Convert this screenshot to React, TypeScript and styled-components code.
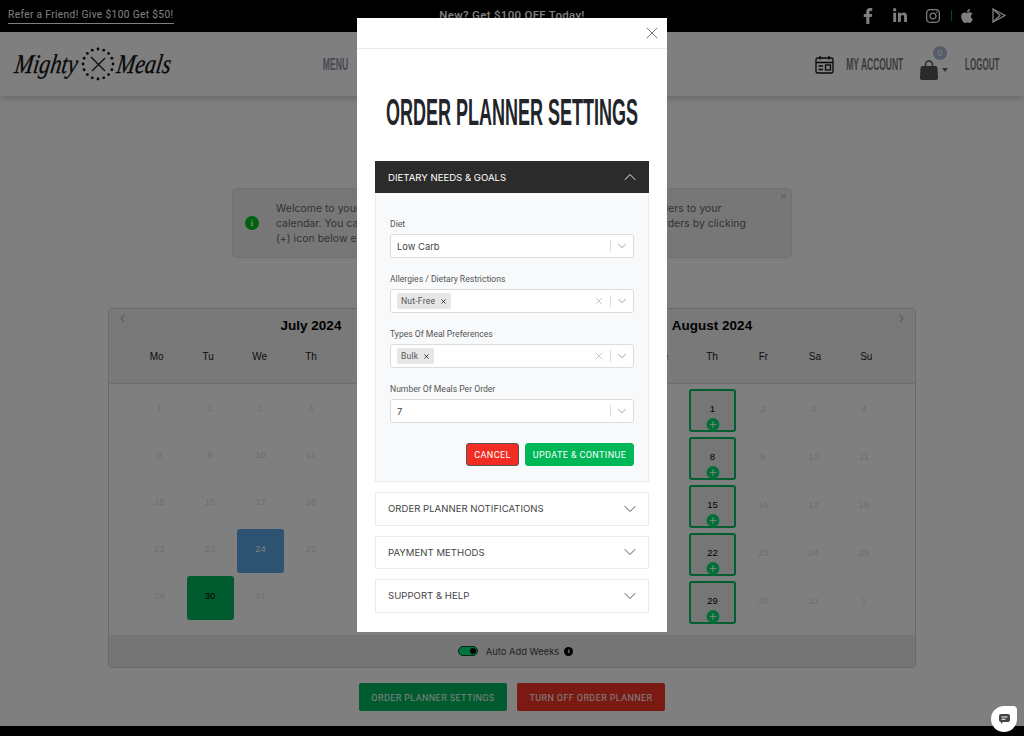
import React from "react";
import styled, { createGlobalStyle } from "styled-components";
import { ChevronDown, ChevronUp, ChevronLeft, ChevronRight, X, Plus } from "lucide-react";
import { FaFacebookF, FaLinkedinIn, FaInstagram, FaApple } from "react-icons/fa";

const Global = createGlobalStyle`
  html, body { margin: 0; padding: 0; width: 1024px; height: 736px; overflow: hidden; background: #fff; font-family: Inter, "Liberation Sans", sans-serif; }
  * { box-sizing: border-box; }
`;
const Page = styled.div`width: 1024px; height: 736px; display: flex; flex-direction: column; overflow: hidden;`;
const TopBar = styled.div`height: 32px; background: #000; display: flex; align-items: center; justify-content: space-between; padding: 0 10px 1px 8px; color: #fff;`;
const Promo = styled.a`font: 400 10.2px Roboto, sans-serif; letter-spacing: .35px; color: #fff; border-bottom: 1px solid #fff; padding-bottom: 3px; margin-top: 1px; width: 166px; white-space: nowrap;`;
const Announce = styled.div`font: 500 11.5px Roboto, sans-serif; letter-spacing: .3px; color: #fff; position: absolute; left: 0; right: 0; top: 8px; text-align: center;`;
const Socials = styled.div`display: flex; align-items: center; color: #fff;`;
const Social = styled.span<{ $w: number; $ml?: number }>`width: ${p => p.$w}px; margin-left: ${p => p.$ml ?? 0}px; display: flex; justify-content: center; font-size: 16px;`;
const Divider = styled.span`width: 1px; height: 11px; background: #0f8f42; margin: 0 8px 0 10px;`;

const Header = styled.header`height: 64px; background: #fff; box-shadow: 0 2px 8px rgba(0,0,0,.22); display: flex; align-items: center; padding: 0 25px 0 15px; position: relative;`;
const Logo = styled.div`width: 156px; display: flex; align-items: center; color: #111; flex-shrink: 0;`;
const LogoWord = styled.span<{ $w: number }>`
  display: block; width: ${p => p.$w}px; flex-shrink: 0; font: italic 400 27px "Liberation Serif", serif; white-space: nowrap;
  -webkit-text-stroke: .3px #111; transform-origin: left center; transform: scaleX(.82) skewX(-10deg);
`;
const NavSlot = styled.div<{ $w: number; $ml?: number }>`width: ${p => p.$w}px; margin-left: ${p => p.$ml ?? 0}px; padding-top: 1px; display: flex; justify-content: center; flex-shrink: 0;`;
const Squeezed = styled.span<{ $size: number; $sx: number; $color: string }>`
  display: inline-block; font: 700 ${p => p.$size}px "Liberation Sans", sans-serif; color: ${p => p.$color};
  transform: scaleX(${p => p.$sx}); white-space: nowrap;
`;
const NavRight = styled.div`margin-left: auto; display: flex; align-items: center;`;
const BagWrap = styled.div`width: 28px; height: 32px; margin-left: 16px; position: relative; display: flex; align-items: flex-end; color: #555;`;
const Badge = styled.span`position: absolute; top: -2px; left: 13px; width: 14px; height: 14px; border-radius: 50%; background: #a9bad0; color: #fff; font: 400 8px Inter, sans-serif; display: flex; align-items: center; justify-content: center;`;
const Caret = styled.span`position: absolute; left: 22px; top: 20px; border: 3.5px solid transparent; border-top: 4px solid #666; border-bottom: 0;`;

const Main = styled.main`flex: 1; display: flex; flex-direction: column; align-items: center; background: #fff; padding-top: 92px;`;
const Alert = styled.div`width: 560px; height: 70px; background: #eee; border: 1px solid #e2e2e2; border-radius: 5px; display: flex; align-items: center; padding-left: 12px; position: relative; font-size: 10.4px; letter-spacing: .06px; line-height: 15px; color: #666;`;
const AlertIcon = styled.span`width: 14px; height: 14px; border-radius: 50%; background: #00c51f; color: #fff; font: 700 9px "Liberation Serif", serif; display: flex; align-items: center; justify-content: center; margin-right: 17px; flex-shrink: 0;`;
const AlertClose = styled.span`position: absolute; top: 3px; right: 3px; color: #999; display: flex;`;

const Calendar = styled.section`width: 808px; height: 360px; margin-top: 50px; border: 1px solid #d4d4d4; border-radius: 3px; display: flex; flex-direction: column; position: relative;`;
const CalTop = styled.div`height: 75px; background: #f3f3f3; border-bottom: 1px solid #d8d8d8; display: flex; gap: 41px; padding-left: 22px;`;
const HeadMonth = styled.div`width: 360px; display: flex; flex-direction: column; align-items: center; padding-top: 8px;`;
const MonthTitle = styled.div`font: 700 13.5px "Liberation Sans", sans-serif; color: #000; height: 18px; line-height: 18px;`;
const Weekdays = styled.div`width: 100%; display: grid; grid-template-columns: repeat(7, 1fr); margin-top: 16px; font: 400 10px "Liberation Sans", sans-serif; color: #222; text-align: center;`;
const Arrow = styled.span<{ $side: string }>`position: absolute; top: 3px; ${p => p.$side}: 7px; color: #bbb; display: flex;`;
const CalBody = styled.div`flex: 1; display: flex; gap: 51.5px; padding: 4px 0 0 27px;`;
const Days = styled.div<{ $h: number; $mt: number; $gap: number }>`width: 350px; margin-top: ${p => p.$mt}px; display: grid; grid-template-columns: repeat(7, 47px); grid-auto-rows: ${p => p.$h}px; column-gap: 3.5px; row-gap: ${p => p.$gap}px; align-content: start;`;
const Day = styled.div<{ $bg?: string; $border?: boolean; $color?: string }>`
  position: relative; border-radius: 3px; text-align: center; padding-top: 14px;
  font: 400 9.5px/12px "Liberation Sans", sans-serif; color: ${p => p.$color ?? "#ddd"};
  background: ${p => p.$bg ?? "transparent"};
  border: ${p => (p.$border ? "2px solid #00c060" : "0")};
  ${p => (p.$border ? "padding-top: 12px; background: #ececec;" : "")}
`;
const AddDot = styled.span`position: absolute; left: 50%; bottom: -1px; transform: translateX(-50%); width: 13px; height: 13px; border-radius: 50%; background: #00e070; color: #fff; display: flex; align-items: center; justify-content: center;`;
const CalFoot = styled.div`height: 32px; background: #ebebeb; display: flex; align-items: center; justify-content: center; font-size: 9.4px; color: #444; padding-left: 7px;`;
const Toggle = styled.span`width: 20px; height: 10px; border-radius: 5px; background: #00e678; border: 1px solid #004d26; position: relative; margin-right: 8px; display: block;`;
const Knob = styled.span`position: absolute; right: 1px; top: 1px; width: 6px; height: 6px; border-radius: 50%; background: #000;`;
const InfoDot = styled.span`width: 9px; height: 9px; border-radius: 50%; background: #000; color: #fff; font: 700 7px "Liberation Serif", serif; display: flex; align-items: center; justify-content: center; margin-left: 5px;`;
const Actions = styled.div`display: flex; gap: 10px; margin-top: 15px;`;
const ActionBtn = styled.button<{ $bg: string }>`width: 148px; height: 28px; border: 0; border-radius: 2px; background: ${p => p.$bg}; color: #fff; font: 400 9px Roboto, sans-serif; letter-spacing: .4px; padding: 1px 0 0;`;
const Foot = styled.footer`height: 10px; background: #000;`;

const Chat = styled.div`position: fixed; z-index: 30; left: 991px; top: 706px; width: 26px; height: 26px; background: #fff; border-radius: 50% 4px 50% 50%; display: flex; align-items: center; justify-content: center;`;
const Overlay = styled.div`position: fixed; inset: 0; background: rgba(0,0,0,.5); z-index: 10;`;
const Modal = styled.div`position: fixed; z-index: 20; left: 357px; top: 18px; width: 310px; height: 614px; background: #fff; display: flex; flex-direction: column;`;
const ModalHead = styled.div`height: 31px; border-bottom: 1px solid #e9ecef; display: flex; align-items: center; justify-content: flex-end; padding-right: 5px; color: #777; flex-shrink: 0;`;
const TitleBlock = styled.div`height: 112px; padding-top: 16px; display: flex; align-items: center; justify-content: center; flex-shrink: 0;`;
const Accordion = styled.div`padding: 0 18px; display: flex; flex-direction: column;`;
const OpenHead = styled.div`height: 32px; background: #2b2b2b; color: #fff; display: flex; align-items: center; justify-content: space-between; padding: 0 9px 0 13px; font-size: 9.6px;`;
const Panel = styled.div`height: 289px; background: #f8f9fa; border: 1px solid #ececec; border-top: 0; padding: 25px 14px 0 14px; margin-bottom: 10px;`;
const Field = styled.div`margin-bottom: 15px;`;
const Label = styled.label`display: block; font: 400 8.6px/12px Roboto, sans-serif; color: #555; margin-bottom: 4px;`;
const Select = styled.div`height: 24px; background: #fff; border: 1px solid #dcdcdc; border-radius: 3px; display: flex; align-items: center; padding-left: 6px; font-size: 9.4px; color: #444;`;
const Value = styled.span`flex: 1;`;
const ChipRow = styled.span`flex: 1; display: flex;`;
const Chip = styled.span`height: 16px; background: #e6e6e6; border-radius: 2px; display: flex; align-items: center; padding: 0 4px; font: 400 8.6px Roboto, sans-serif; letter-spacing: .2px; color: #555; gap: 5px;`;
const ChipX = styled.span`display: flex; color: #222;`;
const ClearX = styled.span`color: #ccc; display: flex; margin-right: 5px;`;
const Sep = styled.span`width: 1px; height: 12px; background: #ddd;`;
const Caretbox = styled.span`width: 22px; display: flex; justify-content: center; color: #ccc;`;
const FormBtns = styled.div`display: flex; justify-content: flex-end; gap: 6px; margin-top: 20px;`;
const FormBtn = styled.button<{ $bg: string; $w: number; $bd: string }>`width: ${p => p.$w}px; height: 23px; background: ${p => p.$bg}; border: 1px solid ${p => p.$bd}; border-radius: 3px; color: #fff; font: 400 9px Roboto, sans-serif; letter-spacing: .4px; padding: 0;`;
const Item = styled.div`height: 33.5px; background: #fff; border: 1px solid #ececec; display: flex; align-items: center; justify-content: space-between; padding: 0 8px 0 12px; font-size: 9.6px; color: #444; margin-bottom: 10px;`;

const mkDays = (n: number) => Array.from({ length: n }, (_, i) => i + 1);
const stars = Array.from({ length: 16 }, (_, i) => (i / 16) * Math.PI * 2);

const LogoMark = () => (
  <svg width="34" height="34" viewBox="0 0 34 34" style={{ margin: "0 2px 0 3px", flexShrink: 0 }}>
    {stars.map((a, i) => (
      <circle key={i} cx={17 + 15 * Math.cos(a)} cy={17 + 15 * Math.sin(a)} r="1.4" fill="#111" />
    ))}
    <path d="M10 10 L24 24 M24 11 L11 24" stroke="#111" strokeWidth="1.2" fill="none" />
  </svg>
);
const CalIcon = () => (
  <svg width="19" height="19" viewBox="0 0 19 19" fill="none" stroke="#111" strokeWidth="1.3">
    <rect x="1" y="3" width="17" height="15" rx="1.5" />
    <path d="M1 7.5H18M5 1V4.5M14 1V4.5M3.5 11H8M3.5 14.5H8" />
    <rect x="10.5" y="10" width="5" height="5" />
  </svg>
);
const BagIcon = () => (
  <svg width="18" height="20" viewBox="0 0 18 20">
    <path d="M5.5 7V4.500a3.500 3.500 0 0 1 7 0V7" stroke="currentColor" strokeWidth="1.500" fill="none" />
    <path d="M2.500 6h13a2 2 0 0 1 2 2l.5 9.500a2 2 0 0 1-2 2.500H2a2 2 0 0 1-2-2.500L.5 8a2 2 0 0 1 2-2z" fill="currentColor" />
  </svg>
);
const PlayIcon = () => (
  <svg width="14" height="15" viewBox="0 0 14 15" fill="none" stroke="#fff" strokeWidth="1.3">
    <path d="M1 1L13 7.500L1 14Z" /><path d="M1 1L8 7.500L1 14" />
  </svg>
);
const ChatIcon = () => (
  <svg width="11" height="10" viewBox="0 0 11 10">
    <path d="M2 0h7a2 2 0 0 1 2 2v4a2 2 0 0 1-2 2H4L2 10V8a2 2 0 0 1-2-2V2a2 2 0 0 1 2-2z" fill="#444" />
    <path d="M2.500 3H8.500M2.500 5.300H6.500" stroke="#fff" strokeWidth="1" />
  </svg>
);

const week = ["Mo", "Tu", "We", "Th", "Fr", "Sa", "Su"];

const SelectBox = ({ children, clear }: { children: React.ReactNode; clear?: boolean }) => (
  <Select>
    {children}
    {clear && <ClearX><X size={12} /></ClearX>}
    <Sep />
    <Caretbox><ChevronDown size={14} /></Caretbox>
  </Select>
);

export default function App() {
  return (
    <>
      <Global />
      <Page>
        <TopBar>
          <Promo>Refer a Friend! Give $100 Get $50!</Promo>
          <Announce>New? Get $100 OFF Today!</Announce>
          <Socials>
            <Social $w={14}><FaFacebookF /></Social>
            <Social $w={50}><FaLinkedinIn /></Social>
            <Social $w={16}><FaInstagram /></Social>
            <Divider />
            <Social $w={14}><FaApple /></Social>
            <Social $w={30} $ml={10}><PlayIcon /></Social>
          </Socials>
        </TopBar>
        <Header>
          <Logo>
            <LogoWord $w={63}>Mighty</LogoWord>
            <LogoMark />
            <LogoWord $w={55}>Meals</LogoWord>
          </Logo>
          <NavSlot $w={26} $ml={152}><Squeezed $size={16} $sx={0.54} $color="#8a93a8">MENU</Squeezed></NavSlot>
          <NavRight>
            <CalIcon />
            <NavSlot $w={58} $ml={12}><Squeezed $size={16} $sx={0.53} $color="#777">MY ACCOUNT</Squeezed></NavSlot>
            <BagWrap><BagIcon /><Badge>0</Badge><Caret /></BagWrap>
            <NavSlot $w={34} $ml={17}><Squeezed $size={16} $sx={0.5} $color="#777">LOGOUT</Squeezed></NavSlot>
          </NavRight>
        </Header>
        <Main>
          <Alert>
            <AlertIcon>i</AlertIcon>
            <span>
              Welcome to your personalized meals planner! Here you can easily add new orders to your<br />
              calendar. You can pick your delivery dates you would like and add additional orders by clicking<br />
              (+) icon below each date.
            </span>
            <AlertClose><X size={9} /></AlertClose>
          </Alert>
          <Calendar>
            <Arrow $side="left"><ChevronLeft size={13} /></Arrow>
            <Arrow $side="right"><ChevronRight size={13} /></Arrow>
            <CalTop>
              {["July 2024", "August 2024"].map(t => (
                <HeadMonth key={t}>
                  <MonthTitle>{t}</MonthTitle>
                  <Weekdays>{week.map(w => <span key={w}>{w}</span>)}</Weekdays>
                </HeadMonth>
              ))}
            </CalTop>
            <CalBody>
              <Days $h={44} $mt={0} $gap={3}>
                {mkDays(31).map(d => (
                  <Day key={d} $bg={d === 24 ? "#5aa4e4" : d === 30 ? "#00b85c" : undefined} $color={d === 24 ? "#fff" : d === 30 ? "#000" : undefined}>{d}</Day>
                ))}
              </Days>
              <Days $h={43} $mt={1} $gap={5}>
                {[0, 0, 0].map((_, i) => <span key={i} />)}
                {[...mkDays(31), 1].map((d, i) => {
                  const thursday = i % 7 === 0;
                  return (
                    <Day key={i} $border={thursday} $color={thursday ? "#000" : undefined}>
                      {d}
                      {thursday && <AddDot><Plus size={9} strokeWidth={3} /></AddDot>}
                    </Day>
                  );
                })}
              </Days>
            </CalBody>
            <CalFoot>
              <Toggle><Knob /></Toggle>
              Auto Add Weeks
              <InfoDot>i</InfoDot>
            </CalFoot>
          </Calendar>
          <Actions>
            <ActionBtn $bg="#00b85c">ORDER PLANNER SETTINGS</ActionBtn>
            <ActionBtn $bg="#f43424">TURN OFF ORDER PLANNER</ActionBtn>
          </Actions>
        </Main>
        <Foot />
      </Page>
      <Overlay />
      <Modal>
        <ModalHead><X size={20} strokeWidth={1.2} /></ModalHead>
        <TitleBlock><Squeezed $size={36} $sx={0.5} $color="#212529">ORDER PLANNER SETTINGS</Squeezed></TitleBlock>
        <Accordion>
          <OpenHead>DIETARY NEEDS &amp; GOALS<ChevronUp size={20} strokeWidth={1.1} /></OpenHead>
          <Panel>
            <Field>
              <Label>Diet</Label>
              <SelectBox><Value>Low Carb</Value></SelectBox>
            </Field>
            <Field>
              <Label>Allergies / Dietary Restrictions</Label>
              <SelectBox clear><ChipRow><Chip>Nut-Free<ChipX><X size={7} strokeWidth={3} /></ChipX></Chip></ChipRow></SelectBox>
            </Field>
            <Field>
              <Label>Types Of Meal Preferences</Label>
              <SelectBox clear><ChipRow><Chip>Bulk<ChipX><X size={7} strokeWidth={3} /></ChipX></Chip></ChipRow></SelectBox>
            </Field>
            <Field>
              <Label>Number Of Meals Per Order</Label>
              <SelectBox><Value>7</Value></SelectBox>
            </Field>
            <FormBtns>
              <FormBtn $bg="#f22e24" $bd="#555" $w={53}>CANCEL</FormBtn>
              <FormBtn $bg="#00b757" $bd="#00b757" $w={109}>UPDATE &amp; CONTINUE</FormBtn>
            </FormBtns>
          </Panel>
          <Item>ORDER PLANNER NOTIFICATIONS<ChevronDown size={20} strokeWidth={1.1} /></Item>
          <Item>PAYMENT METHODS<ChevronDown size={20} strokeWidth={1.1} /></Item>
          <Item>SUPPORT &amp; HELP<ChevronDown size={20} strokeWidth={1.1} /></Item>
        </Accordion>
      </Modal>
      <Chat><ChatIcon /></Chat>
    </>
  );
}
